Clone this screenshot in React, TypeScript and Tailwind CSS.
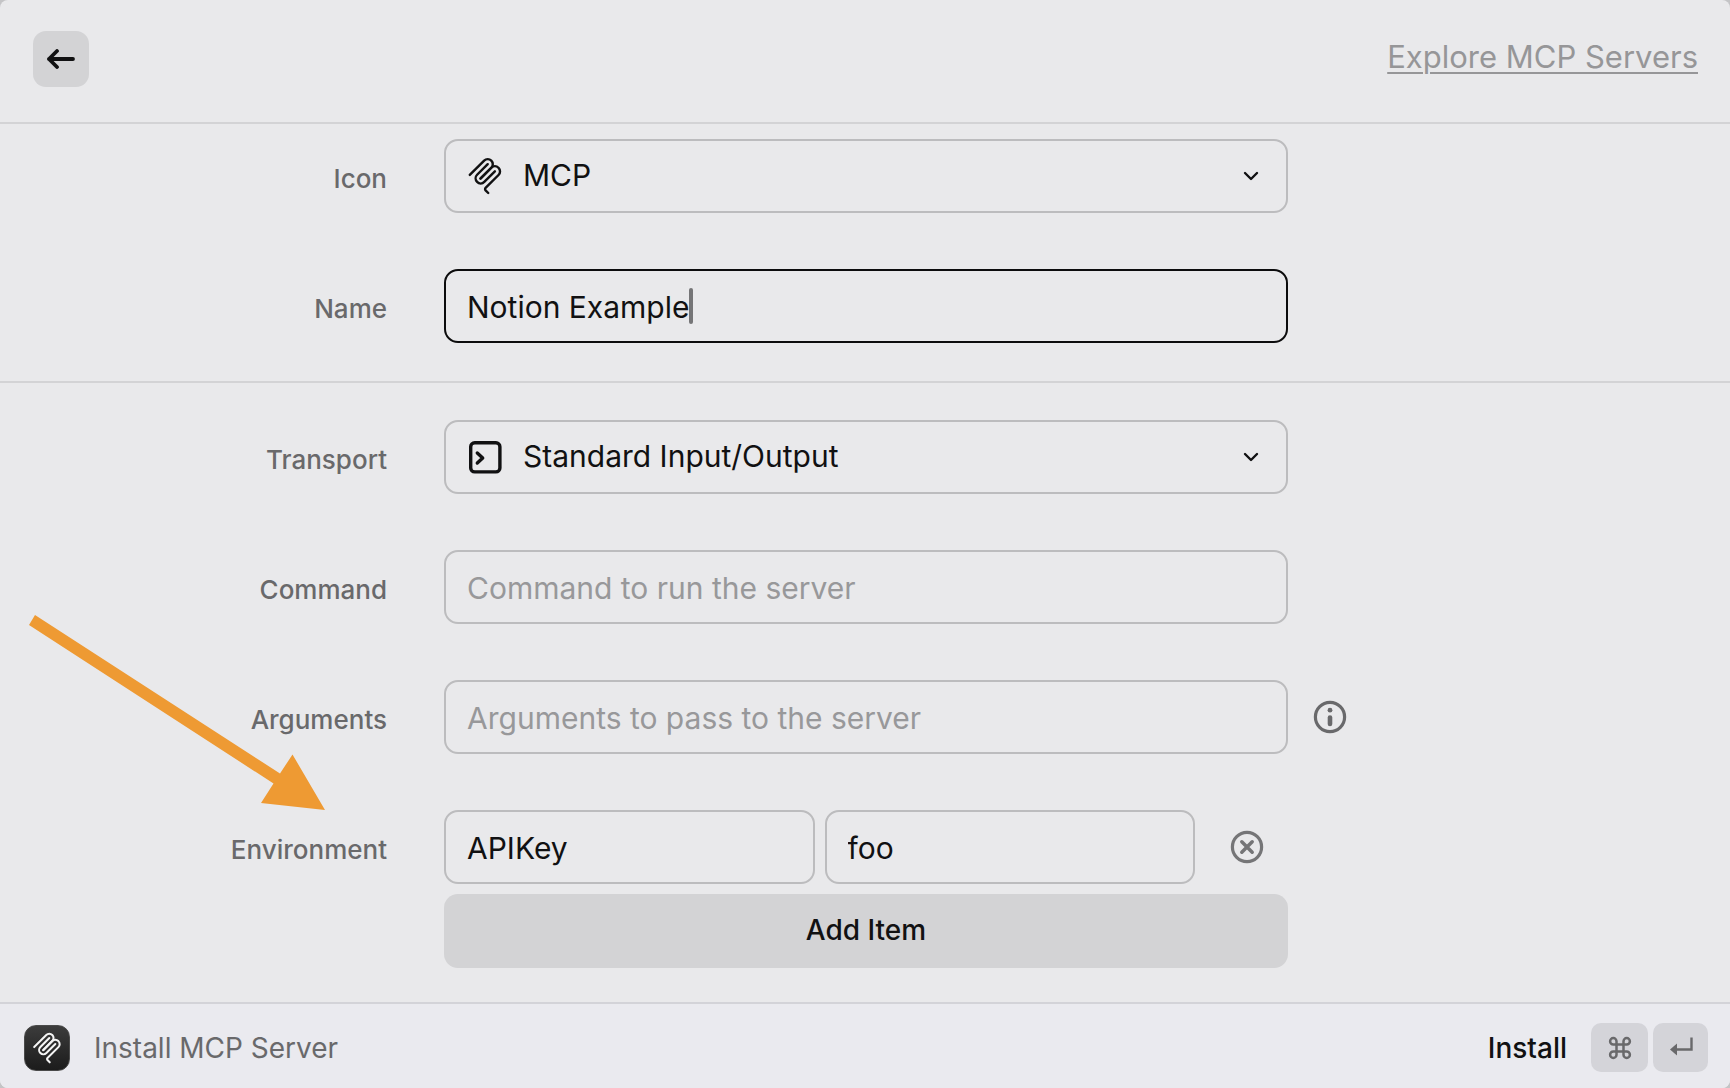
import React from "react";

function McpMark({ className }: { className: string }) {
  return (
    <svg viewBox="0 0 180 180" fill="none" stroke="currentColor" strokeWidth="11.5" strokeLinecap="round" className={className} aria-hidden="true">
      <path d="M18 84.8528L85.8822 16.9706C95.2548 7.59798 110.451 7.59798 119.823 16.9706C129.196 26.3431 129.196 41.5391 119.823 50.9117L68.5581 102.177" />
      <path d="M69.2652 101.47L119.823 50.9117C129.196 41.5391 144.392 41.5391 153.765 50.9117L154.118 51.2652C163.491 60.6378 163.491 75.8338 154.118 85.2063L92.7248 146.6C89.6006 149.724 89.6006 154.789 92.7248 157.913L105.331 170.52" />
      <path d="M102.853 33.9411L52.6482 84.1457C43.2756 93.5183 43.2756 108.714 52.6482 118.087C62.0208 127.459 77.2167 127.459 86.5893 118.087L136.794 67.8822" />
    </svg>
  );
}

function TerminalMark({ className }: { className: string }) {
  return (
    <svg viewBox="0 0 38 38" fill="none" stroke="currentColor" strokeWidth="3.4" strokeLinecap="round" strokeLinejoin="round" className={className} aria-hidden="true">
      <rect x="4.7" y="4.7" width="29.2" height="29.2" rx="4" />
      <path d="M11.3 15l5.4 5l-5.4 5" />
    </svg>
  );
}

function Chevron() {
  return (
    <svg viewBox="0 0 16 10" fill="none" stroke="currentColor" strokeWidth="2.4" strokeLinecap="round" strokeLinejoin="round" className="pointer-events-none absolute right-[29px] h-[10px] w-4" aria-hidden="true">
      <path d="M2 2l6 6l6-6" />
    </svg>
  );
}

const fieldBox = "h-[74px] w-full rounded-[14px] border-2 border-[#bcbcbe] bg-transparent text-[30px] text-[#111112] outline-none placeholder:text-[#98989a]";

function Row({ id, label, aside, children }: { id: string; label: string; aside?: React.ReactNode; children: React.ReactNode }) {
  return (
    <div className="grid grid-cols-[444fr_844fr_442fr]">
      <label htmlFor={id} className="flex h-[74px] items-center justify-end pt-1 pr-[57px] text-[26px] font-medium text-[#69696b]">
        {label}
      </label>
      <div className="min-w-0">{children}</div>
      <div className="flex h-[74px] items-center pl-6 text-[#69696b]">{aside}</div>
    </div>
  );
}

function SelectField({ id, value, icon }: { id: string; value: string; icon: React.ReactNode }) {
  return (
    <div className="relative flex items-center text-[#111112]">
      <span className="pointer-events-none absolute left-[22px]">{icon}</span>
      <select id={id} defaultValue={value} className={`${fieldBox} appearance-none pr-16 pb-[2px] pl-[77px]`}>
        <option>{value}</option>
      </select>
      <Chevron />
    </div>
  );
}

export default function App() {
  return (
    <div className="min-h-screen bg-[#c4c4c6] font-['Inter',sans-serif]">
      <div className="relative flex min-h-screen flex-col overflow-hidden rounded-[8px] bg-[#e9e9eb]">
        <header className="flex h-[124px] items-center justify-between border-b-2 border-[#d3d3d5] pr-8 pb-1 pl-[33px]">
          <button type="button" aria-label="Back" className="flex size-14 items-center justify-center rounded-[13px] bg-[#d3d3d5] text-[#111112]">
            <svg viewBox="0 0 28 20" fill="none" stroke="currentColor" strokeWidth="3.8" strokeLinecap="round" strokeLinejoin="round" className="h-5 w-7" aria-hidden="true">
              <path d="M2 10h24M10 2l-8 8l8 8" />
            </svg>
          </button>
          <a href="#explore" className="pb-1 text-[31px] text-[#969698] underline decoration-2 underline-offset-4">
            Explore MCP Servers
          </a>
        </header>

        <form className="flex flex-1 flex-col" onSubmit={(e) => e.preventDefault()}>
          <section className="flex flex-col gap-14 border-b-2 border-[#d3d3d5] pt-[15px] pb-[38px]">
            <Row id="icon" label="Icon">
              <SelectField id="icon" value="MCP" icon={<McpMark className="size-[38px]" />} />
            </Row>
            <Row id="name" label="Name">
              <div className="flex h-[74px] items-center rounded-[14px] border-2 border-[#0c0c0d] pl-[21px]">
                <input id="name" type="text" defaultValue="Notion Example" className="field-sizing-content h-full bg-transparent pt-[2px] text-[30px] text-[#111112] caret-transparent outline-none" />
                <span className="h-9 w-1 rounded-full bg-[#757577]" />
              </div>
            </Row>
          </section>

          <section className="flex flex-1 flex-col gap-14 pt-[37px] pb-[34px]">
            <Row id="transport" label="Transport">
              <SelectField id="transport" value="Standard Input/Output" icon={<TerminalMark className="size-[38px]" />} />
            </Row>
            <Row id="command" label="Command">
              <input id="command" type="text" placeholder="Command to run the server" className={`${fieldBox} px-[21px] pt-[2px]`} />
            </Row>
            <Row
              id="arguments"
              label="Arguments"
              aside={
                <button type="button" aria-label="About arguments">
                  <svg viewBox="0 0 36 36" fill="none" className="size-9" aria-hidden="true">
                    <circle cx="18" cy="18" r="14.6" stroke="currentColor" strokeWidth="3.2" />
                    <circle cx="18" cy="11.2" r="2.4" fill="currentColor" />
                    <path d="M18 18.5v6.5" stroke="currentColor" strokeWidth="4.6" strokeLinecap="round" />
                  </svg>
                </button>
              }
            >
              <input id="arguments" type="text" placeholder="Arguments to pass to the server" className={`${fieldBox} px-[21px] pt-[2px]`} />
            </Row>
            <Row id="environment" label="Environment">
              <div className="flex flex-col gap-[10px]">
                <div className="flex items-center gap-[10px]">
                  <input id="environment" type="text" defaultValue="APIKey" className={`${fieldBox} min-w-0 flex-1 px-[21px] pt-[2px]`} />
                  <input type="text" aria-label="Environment value" defaultValue="foo" className={`${fieldBox} min-w-0 flex-1 px-[21px] pt-[2px]`} />
                  <button type="button" aria-label="Remove item" className="flex w-[83px] items-center justify-center text-[#757577]">
                    <svg viewBox="0 0 36 36" fill="none" stroke="currentColor" strokeLinecap="round" className="size-9" aria-hidden="true">
                      <circle cx="18" cy="18" r="14.6" strokeWidth="3.2" />
                      <path d="M12.8 12.8l10.400 10.400M23.200 12.800l-10.400 10.400" strokeWidth="3.5" />
                    </svg>
                  </button>
                </div>
                <button type="button" className="h-[74px] w-full rounded-[14px] bg-[#d3d3d5] pb-[2px] text-[28px] font-medium text-[#111112]">
                  Add Item
                </button>
              </div>
            </Row>
          </section>
        </form>

        <footer className="flex h-[86px] items-center justify-between border-t-2 border-[#d3d3d8] bg-[#eaeaef] pt-[3px] pr-[22px] pl-6">
          <div className="flex items-center gap-6 text-[28px] text-[#69696b]">
            <span className="flex size-[46px] items-center justify-center rounded-[12px] border border-[#4a4a4a] bg-linear-to-b from-[#3c3c3c] to-[#1c1c1c] text-[#f4f4f4]">
              <McpMark className="size-8" />
            </span>
            Install MCP Server
          </div>
          <div className="flex items-center">
            <button type="button" className="mr-6 text-[28px] font-medium text-[#111112]">
              Install
            </button>
            <div className="flex gap-[5px] text-[#69696b]">
              <kbd className="flex h-[49px] w-[57px] items-center justify-center rounded-[10px] bg-[#d4d4d9]">
                <svg viewBox="0 0 24 24" fill="none" stroke="currentColor" strokeWidth="2.5" className="size-6" aria-label="Command">
                  <path d="M8.5 8.5h7v7h-7zM8.5 8.5H5.3a3.2 3.2 0 1 1 3.2-3.2zM15.5 8.5V5.3a3.2 3.2 0 1 1 3.2 3.2zM15.5 15.5h3.2a3.2 3.2 0 1 1-3.2 3.2zM8.5 15.5v3.2a3.2 3.2 0 1 1-3.2-3.2z" />
                </svg>
              </kbd>
              <kbd className="flex h-[49px] w-[55px] items-center justify-center rounded-[10px] bg-[#d4d4d9]">
                <svg viewBox="0 0 24 24" fill="none" className="size-6" aria-label="Return">
                  <path d="M22.5 1.500v12H6" stroke="currentColor" strokeWidth="2.4" />
                  <path d="M1 13.500l7-6v12z" fill="currentColor" />
                </svg>
              </kbd>
            </div>
          </div>
        </footer>

        <svg viewBox="0 0 300 200" className="pointer-events-none absolute top-[612px] left-7 h-[200px] w-[300px]" aria-hidden="true">
          <path d="M7 3L252 161.500L264.500 142.500L297 198L233 191L245.500 171.500L1 13z" fill="#ee9a33" />
        </svg>
      </div>
    </div>
  );
}
